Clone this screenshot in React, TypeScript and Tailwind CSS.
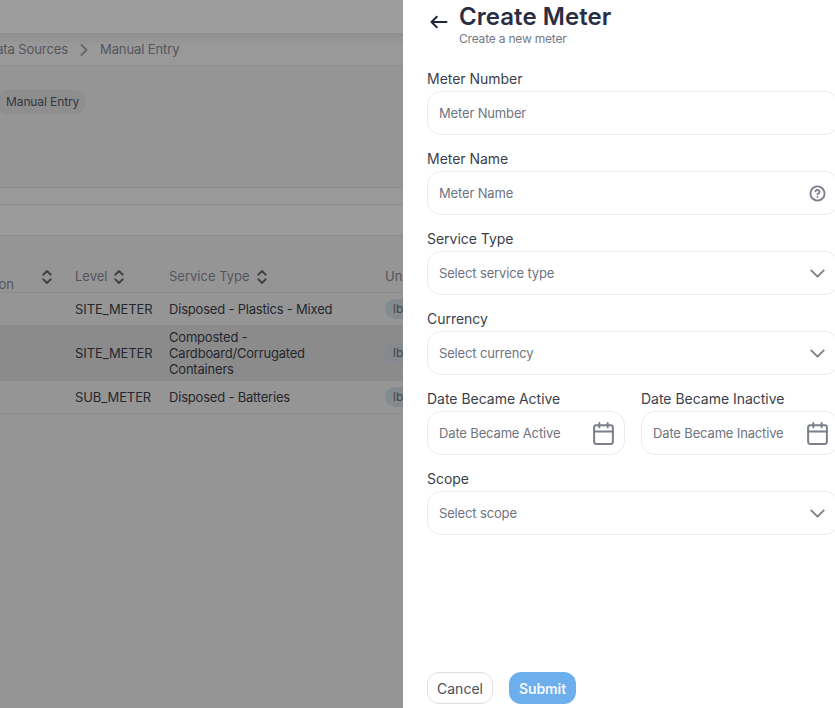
import React from "react";
import { ChevronDown, ChevronRight, ChevronsUpDown, CircleHelp, Calendar } from "lucide-react";

const font = "font-['Inter','Noto_Sans',sans-serif]";

function Sort() {
  return <ChevronsUpDown size={18} strokeWidth={2.4} className="text-[#3f4248] shrink-0" />;
}

function Row({ level, type, bg, h }: { level: string; type: React.ReactNode; bg: string; h: string }) {
  return (
    <div className={`flex items-center border-b border-[#8b8b8b] text-[13px] leading-4 text-[#25272e] ${bg} ${h}`}>
      <div className="w-[75px] shrink-0" />
      <div className="w-[94px] shrink-0 tracking-[-0.1px]">{level}</div>
      <div className="w-[216px] shrink-0"><div className="w-[165px] tracking-[-0.2px]">{type}</div></div>
      <div className="rounded-full bg-[#858a90] h-5 w-9 pl-2 text-[12px] leading-5 text-[#3f444b] shrink-0">lbs</div>
    </div>
  );
}

function Field({ label, placeholder, icon, className }: { label: string; placeholder: string; icon?: React.ReactNode; className?: string }) {
  return (
    <div className={className}>
      <div className="h-5 text-[14px] leading-5 tracking-[-0.02px] text-[#3b3f4c]">{label}</div>
      <div className="mt-[2px] h-[44px] rounded-[14px] border border-[#eaebee] bg-white px-[11px] flex items-center justify-between">
        <span className="text-[13px] pt-[2px] tracking-[-0.15px] text-[#6f7380]">{placeholder}</span>
        {icon}
      </div>
    </div>
  );
}

const Chev = <ChevronDown size={25} strokeWidth={1.8} className="text-[#7b7f8a] -mr-[2.5px]" />;
const Cal = <Calendar size={25} strokeWidth={1.9} className="text-[#7b7f8a] -mr-[3px]" />;

export default function App() {
  return (
    <div className={`flex h-[708px] w-[835px] overflow-hidden bg-white ${font}`}>
      <div className="w-[403px] shrink-0 overflow-hidden bg-[#959595] flex flex-col">
        <div className="h-[33px] bg-[#9d9d9d] shrink-0" />
        <div className="h-[33px] shrink-0 border-b border-[#8e8e8e] bg-gradient-to-b from-[#8f8f8f] to-[#999999] to-40% flex items-center text-[13px] tracking-[-0.1px] text-[#54565c] whitespace-nowrap -ml-[38px] pt-[2px]">
          <span className="w-[106px] text-right">Data Sources</span>
          <ChevronRight size={20} strokeWidth={2.4} className="ml-[6px] mr-[6px] text-[#66686d]" />
          <span>Manual Entry</span>
        </div>
        <div className="h-[122px] shrink-0 border-b border-[#8e8e8e] pt-[24px] flex items-start">
          <span className="-ml-[4px] rounded-full bg-[#8e8e8e] h-6 pl-[10px] pr-[7px] text-[12px] leading-6 tracking-[-0.1px] text-[#33363d]">Manual Entry</span>
        </div>
        <div className="h-[17px] shrink-0 border-b border-[#8e8e8e] bg-[#999999]" />
        <div className="h-[31px] shrink-0 border-b border-[#8e8e8e] bg-[#9b9b9b]" />
        <div className="h-[57px] shrink-0 flex items-center border-b border-[#8b8b8b] pt-[26px] text-[13px] text-[#54565c]">
          <div className="w-[75px] shrink-0 flex items-center">
            <span className="-ml-[9px] mt-[15px]">tion</span>
            <span className="ml-[24px] -mt-[1px]"><Sort /></span>
          </div>
          <div className="w-[94px] shrink-0 flex items-center gap-[3px]">Level <Sort /></div>
          <div className="w-[216px] shrink-0 flex items-center gap-[3px]">Service Type <Sort /></div>
          <div>Unit</div>
        </div>
        <Row level="SITE_METER" type="Disposed - Plastics - Mixed" bg="" h="h-[33px]" />
        <Row level="SITE_METER" type="Composted - Cardboard/Corrugated Containers" bg="bg-[#8b8b8b]" h="h-[55px]" />
        <Row level="SUB_METER" type="Disposed - Batteries" bg="" h="h-[33px]" />
      </div>
      <div className="flex-1 min-w-0 bg-white pl-6 flex flex-col h-full">
        <div className="w-[412px] flex flex-col h-full">
          <div className="flex h-[69px] shrink-0">
            <svg width="18" height="14" viewBox="0 0 18 14" fill="none" stroke="#23263a" strokeWidth="2" strokeLinecap="round" strokeLinejoin="round" className="mt-[15px] ml-[3px] shrink-0">
              <path d="M16.5 7H1.5M6.8 1.8L1.5 7l5.3 5.2" />
            </svg>
            <div className="ml-[11px]">
              <div className="text-[24px] leading-[36px] mt-[-1px] font-semibold tracking-[0.05px] text-[#2b2e42]">Create Meter</div>
              <div className="text-[12px] leading-[12px] mt-[-2px] tracking-[-0.2px] text-[#757987]">Create a new meter</div>
            </div>
          </div>
          <div className="flex flex-col gap-[14px]">
            <Field label="Meter Number" placeholder="Meter Number" />
            <Field label="Meter Name" placeholder="Meter Name" icon={<CircleHelp size={17} strokeWidth={2.6} className="text-[#7b7f8a] mr-[1px]" />} />
            <Field label="Service Type" placeholder="Select service type" icon={Chev} />
            <Field label="Currency" placeholder="Select currency" icon={Chev} />
            <div className="flex gap-4">
              <Field className="flex-1" label="Date Became Active" placeholder="Date Became Active" icon={Cal} />
              <Field className="flex-1" label="Date Became Inactive" placeholder="Date Became Inactive" icon={Cal} />
            </div>
            <Field label="Scope" placeholder="Select scope" icon={Chev} />
          </div>
          <div className="mt-auto mb-1 flex gap-4">
            <button className="h-8 w-[66px] rounded-[12px] border border-[#dfe0e3] bg-white text-[14px] tracking-[0px] text-[#4a4d5a]">Cancel</button>
            <button className="h-8 w-[67px] rounded-[12px] bg-[#6daeed] text-[14px] font-semibold tracking-[-0.1px] text-[#f3f8fd]">Submit</button>
          </div>
        </div>
      </div>
    </div>
  );
}
